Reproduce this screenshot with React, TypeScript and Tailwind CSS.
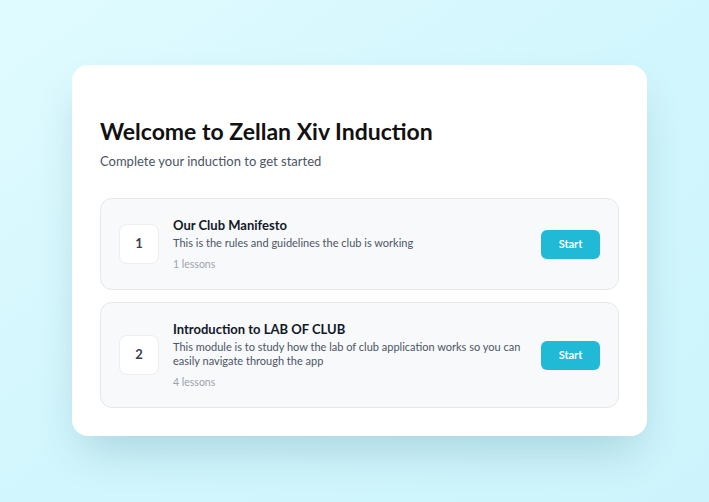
const modules = [
  {
    id: 1,
    title: "Our Club Manifesto",
    description: "This is the rules and guidelines the club is working",
    lessons: 1,
  },
  {
    id: 2,
    title: "Introduction to LAB OF CLUB",
    description:
      "This module is to study how the lab of club application works so you can easily navigate through the app",
    lessons: 4,
  },
]

function ModuleRow({ module }: { module: (typeof modules)[number] }) {
  return (
    <div className="flex items-center gap-[14px] rounded-xl border border-[#e5e7eb] bg-[#f8f9fb] px-[18px] py-[17px]">
      <div className="flex h-10 w-10 shrink-0 items-center justify-center rounded-lg border border-[#eceef1] bg-white text-[13px] font-bold text-[#374151]">
        {module.id}
      </div>
      <div className="min-w-0 flex-1">
        <h3 className="text-[13px] font-bold leading-[18px] text-[#111827]">{module.title}</h3>
        <p className="mt-[2px] text-[11px] leading-[14px] text-[#4b5563]">{module.description}</p>
        <p className="mt-[6px] text-[10.5px] leading-4 text-[#9ca3af]">{module.lessons} lessons</p>
      </div>
      <button
        type="button"
        className="h-[29px] w-[59px] shrink-0 rounded-md bg-[#20b9d6] text-[11px] font-bold text-white"
      >
        Start
      </button>
    </div>
  )
}

export default function App() {
  return (
    <div
      className="flex min-h-[502px] items-start justify-center bg-gradient-to-br from-[#e0fbff] via-[#d2f6fd] to-[#cdf4fc] pl-[10px] pt-[65px]"
      style={{ fontFamily: 'Lato, "Noto Sans", sans-serif' }}
    >
      <div className="w-[575px] rounded-2xl bg-white px-7 pb-7 pt-[50px] shadow-[0_22px_45px_-10px_rgba(0,70,90,0.2)]">
        <h1 className="text-[23px] font-bold leading-8 text-[#111111]">Welcome to Zellan Xiv Induction</h1>
        <p className="mt-1 text-[13px] leading-5 text-[#4b5563]">Complete your induction to get started</p>
        <div className="mt-[27px] flex flex-col gap-3">
          {modules.map((m) => (
            <ModuleRow key={m.id} module={m} />
          ))}
        </div>
      </div>
    </div>
  )
}
